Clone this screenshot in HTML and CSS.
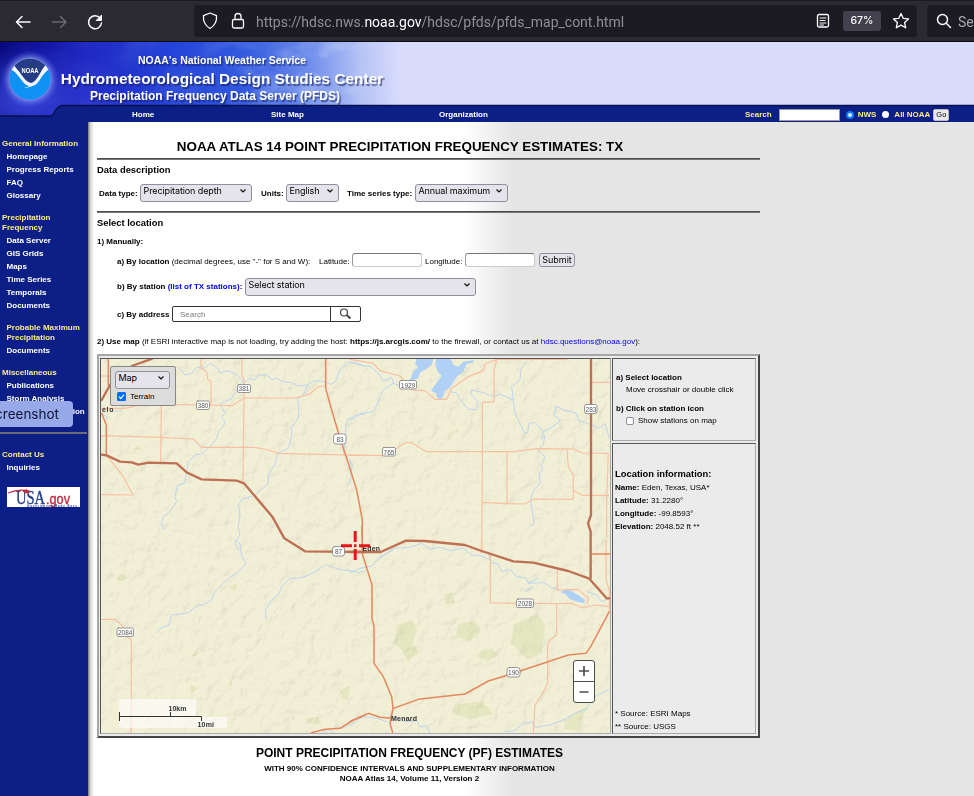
FILE: index.html
```html
<!DOCTYPE html>
<html lang="en">
<head>
<meta charset="utf-8">
<title>PF Map: Contiguous US</title>
<link rel="stylesheet" href="styles.css">
</head>
<body>
<div class="toolbar">
  <svg class="nav-icons" width="120" height="40" viewBox="0 0 120 40" fill="none" stroke-width="1.5" stroke-linecap="round" stroke-linejoin="round">
    <path d="M30 22H17M22 16.500L16.500 22L22 27.500" stroke="#fbfbfe"/>
    <path d="M52.500 22H65.500M60.500 16.500L66 22L60.500 27.500" stroke="#69686f"/>
    <path d="M100 18A6.500 6.500 0 1 0 101.500 23" stroke="#fbfbfe"/>
    <path d="M101.500 15.500V20.500H96.500Z" fill="#fbfbfe" stroke="#fbfbfe" stroke-width="1"/>
  </svg>
  <div class="url-bar">
    <svg width="60" height="32" viewBox="194 6 60 32" fill="none" stroke="#fbfbfe" stroke-width="1.3" stroke-linejoin="round">
      <path d="M210 14L216.500 16.600C217 22 215 26.500 210 29.500C205 26.500 203 22 203.500 16.600Z"/>
      <rect x="232.500" y="20.500" width="11" height="8.500" rx="1.500"/><path d="M235 20.500V17.500a3 3 0 0 1 6 0V20.500"/>
    </svg>
    <span class="url">https://hdsc.nws.<b>noaa.gov</b>/hdsc/pfds/pfds_map_cont.html</span>
    <svg class="reader" width="14" height="16" viewBox="0 0 14 16" fill="none" stroke="#fbfbfe" stroke-width="1.3" stroke-linecap="round"><rect x="1.500" y="1.500" width="11" height="12.500" rx="1.500"/><path d="M4 5H10M4 7.500H9M4 10H10M4 12H7.500" stroke-width="1"/></svg>
    <span class="zoom">67%</span>
    <svg width="18" height="18" viewBox="0 0 18 18" fill="none" stroke="#fbfbfe" stroke-width="1.300" stroke-linejoin="round"><path d="M9 1.500L11.200 6.300L16.500 6.900L12.600 10.500L13.700 15.800L9 13.100L4.300 15.800L5.400 10.500L1.500 6.900L6.800 6.300Z"/></svg>
  </div>
  <div class="search-bar">
    <svg width="16" height="16" viewBox="0 0 16 16" fill="none" stroke="#fbfbfe" stroke-width="1.500" stroke-linecap="round"><circle cx="6.500" cy="6.500" r="5"/><path d="M10.300 10.300L14.500 14.500"/></svg>
    <span>Search</span>
  </div>
</div>

<header class="banner">
  <svg class="banner-art" width="974" height="80" viewBox="0 42 974 80">
    <defs>
      <linearGradient id="sky" gradientUnits="userSpaceOnUse" x1="0" y1="70" x2="400" y2="60">
        <stop offset="0" stop-color="#07077a"/><stop offset=".1" stop-color="#1013a0"/><stop offset=".22" stop-color="#2029c4"/><stop offset=".42" stop-color="#2442d8"/>
        <stop offset=".62" stop-color="#345be0"/><stop offset=".78" stop-color="#7290ec"/><stop offset=".9" stop-color="#b4c2f5"/><stop offset="1" stop-color="#dadcfc"/>
      </linearGradient>
      <radialGradient id="halo"><stop offset=".6" stop-color="#b9c8ff" stop-opacity=".9"/><stop offset="1" stop-color="#3b50e0" stop-opacity="0"/></radialGradient>
      <radialGradient id="glow"><stop offset="0" stop-color="#3b49e0" stop-opacity=".9"/><stop offset="1" stop-color="#3b49e0" stop-opacity="0"/></radialGradient>
      <linearGradient id="fade"><stop offset="0" stop-color="#111"/><stop offset=".5" stop-color="#333"/><stop offset=".8" stop-color="#fff"/><stop offset="1" stop-color="#000"/></linearGradient>
      <mask id="fademask"><rect y="42" width="400" height="64" fill="url(#fade)"/></mask>
      <filter id="cloud" x="0" y="0" width="100%" height="100%"><feTurbulence type="fractalNoise" baseFrequency=".025 .04" numOctaves="4" seed="4"/><feColorMatrix values="0 0 0 0 .7  0 0 0 0 .8  0 0 0 0 1  1.600 0 0 0 -.7"/></filter>
      <clipPath id="disc"><circle cx="30" cy="79" r="20.500"/></clipPath>
    </defs>
    <rect y="42" width="974" height="80" fill="#dadcfc"/>
    <rect y="42" width="400" height="80" fill="url(#sky)"/>
    <ellipse cx="25" cy="100" rx="95" ry="55" fill="url(#glow)"/>
    <g mask="url(#fademask)"><rect y="42" width="400" height="64" filter="url(#cloud)" opacity=".7"/></g>
    <circle cx="30" cy="79" r="29" fill="url(#halo)"/>
    <g clip-path="url(#disc)">
      <rect x="9" y="58" width="42" height="42" fill="#0e93f4"/>
      <path d="M9 58H51V69C47 69 43 75 39 81C35 87 29 88 24 83C19 77 15 70 9 69Z" fill="#f3f5ff"/>
      <path d="M9 58H51L44 67C40 72 37 82 31 83C25 82 21 73 16 68Z" fill="#263c86"/>
      <path d="M24 88C29 87 33 84 37 81C34 86 29 88 24 88Z" fill="#fff"/>
    </g>
    <text x="21.500" y="72.500" class="emblem" textLength="17" lengthAdjust="spacingAndGlyphs">NOAA</text>
    <path d="M0 122V116H51C54 116 56 105 62 105H974V122Z" fill="#0c1f87"/>
    <path d="M0 116H51C54 116 56 105.500 62 105.500H974" fill="none" stroke="#07104e" stroke-width="1.500"/>
  </svg>
  <div class="titles">
    <div class="t1">NOAA's National Weather Service</div>
    <div class="t2">Hydrometeorological Design Studies Center</div>
    <div class="t3">Precipitation Frequency Data Server (PFDS)</div>
  </div>
  <nav class="menu">
    <a class="m-home">Home</a><a class="m-site">Site Map</a><a class="m-org">Organization</a>
    <div class="site-search"><span>Search</span><i class="q"></i><i class="radio on"></i><span>NWS</span><i class="radio"></i><span>All NOAA</span><button>Go</button></div>
  </nav>
</header>

<div class="page">
  <aside class="sidebar">
    <section><h4>General Information</h4><a>Homepage</a><a>Progress Reports</a><a>FAQ</a><a>Glossary</a></section>
    <section><h4>Precipitation<br>Frequency</h4><a>Data Server</a><a>GIS Grids</a><a>Maps</a><a>Time Series</a><a>Temporals</a><a>Documents</a></section>
    <section><h4 class="indent">Probable Maximum<br>Precipitation</h4><a>Documents</a></section>
    <section><h4>Miscellaneous</h4><a>Publications</a><a>Storm Analysis</a><a>Record Precipitation</a></section>
    <div class="rule"></div>
    <section><h4>Contact Us</h4><a>Inquiries</a></section>
    <svg class="usa" width="73" height="20" viewBox="0 0 73 20">
      <rect width="73" height="20" fill="#fff"/>
      <text x="9" y="17" class="usa-a" textLength="29" lengthAdjust="spacingAndGlyphs">USA</text>
      <text x="39" y="16.500" class="usa-b" textLength="24" lengthAdjust="spacingAndGlyphs">.gov</text>
      <path d="M1 6C8 3 15 2.500 22 4" fill="none" stroke="#c52a3d" stroke-width="1.200"/>
      <path d="M19 1.500L20.500 3.500L23 3.500L21 5L22 7L19.500 6L17.500 7L18 5L16 3.500H18.500Z" fill="#c52a3d"/>
      <text x="20" y="19.500" class="usa-c" textLength="50">Government Made Easy</text>
    </svg>
    <div class="tip">Screenshot</div>
  </aside>

  <main>
    <h1>NOAA ATLAS 14 POINT PRECIPITATION FREQUENCY ESTIMATES: TX</h1>
    <div class="hr"></div>
    <h2>Data description</h2>
    <div class="row desc">
      <b class="l1">Data type:</b><span class="sel s1">Precipitation depth<svg class="chev" viewBox="0 0 8 6"><path d="M1.500 1.500L4 4L6.500 1.500"/></svg></span>
      <b class="l2">Units:</b><span class="sel s2">English<svg class="chev" viewBox="0 0 8 6"><path d="M1.500 1.500L4 4L6.500 1.500"/></svg></span>
      <b class="l3">Time series type:</b><span class="sel s3">Annual maximum<svg class="chev" viewBox="0 0 8 6"><path d="M1.500 1.500L4 4L6.500 1.500"/></svg></span>
    </div>
    <div class="hr"></div>
    <h2>Select location</h2>
    <div class="manual"><b>1) Manually:</b></div>
    <div class="row ra"><span class="la"><b>a) By location</b> (decimal degrees, use "-" for S and W):</span><span class="lat">Latitude:</span><i class="field"></i><span class="lon">Longitude:</span><i class="field"></i><button>Submit</button></div>
    <div class="row rb"><span class="lb"><b>b) By station <a>(list of TX stations)</a>:</b></span><span class="sel s4">Select station<svg class="chev" viewBox="0 0 8 6"><path d="M1.500 1.500L4 4L6.500 1.500"/></svg></span></div>
    <div class="row rc"><b class="lc">c) By address</b><span class="addr"><span>Search</span><svg width="29" height="14" viewBox="0 0 29 14" fill="none" stroke="#444"><circle cx="13" cy="5.500" r="3.500" stroke-width="1.200"/><path d="M15.700 8L19.500 11.500" stroke-width="1.800"/></svg></span></div>
    <div class="use"><b>2) Use map</b> (if ESRI interactive map is not loading, try adding the host: <b>https://js.arcgis.com/</b> to the firewall, or contact us at <a>hdsc.questions@noaa.gov</a>):</div>

    <div class="frame">
      <div class="map">
        <svg width="509" height="374" viewBox="101 359 509 374" fill="none" stroke-linejoin="round" stroke-linecap="round">
          <defs>
            <filter id="relief" x="0" y="0" width="100%" height="100%"><feTurbulence type="fractalNoise" baseFrequency=".08" numOctaves="4" seed="9" result="n"/><feColorMatrix in="n" values="0 0 0 0 0 0 0 0 0 0 0 0 0 0 0 1 0 0 0 0"/><feDiffuseLighting surfaceScale="5" diffuseConstant="1.150" lighting-color="#fff"><feDistantLight azimuth="225" elevation="60"/></feDiffuseLighting></filter>
          </defs>
          <rect x="101" y="359" width="509" height="374" fill="#f2efd7"/>
          <g fill="#dfe4b5" opacity=".7">
            <path d="M398 625L412 620L417 630L412 645L420 652L408 661L402 650L394 644Z"/>
            <path d="M458 624L475 621L481 632L470 641L456 636Z"/>
            <path d="M514 624L538 614L545 625L542 652L528 660L511 643Z"/>
            <path d="M455 705L482 701L494 714L470 719L452 713Z"/>
            <path d="M482 650L492 648L498 655L488 661L476 656Z"/>
            <path d="M570 715L587 706L578 731L565 729Z"/>
            <path d="M340 690L350 686L348 700L342 699ZM305 718L318 717L322 724L308 723Z"/>
            <path d="M445 594L452 592L455 603L446 604ZM116 578L122 574L128 578L120 582ZM228 588L237 583L236 590Z"/>
            <path d="M132 450L138 445L142 450ZM450 434L457 429L459 432ZM190 656L198 652L196 656ZM190 685L198 688L192 693ZM228 684L232 679L232 686Z"/>
          </g>
          <rect class="relief" x="101" y="359" width="509" height="374" filter="url(#relief)"/>
          <g transform="translate(350 350) scale(.33333)" fill="#b0d0f5">
            <path d="M200 27H250L245 45L228 58L210 68L205 85L178 93L192 62L205 52L195 42Z"/>
            <path d="M258 27H302L310 45L325 50L340 35L372 30L368 38L350 42L340 65L322 78L310 95L300 112L285 122L276 147L262 145L258 130L243 122L262 95L275 78L262 62L256 45Z"/>
          </g>
          <g stroke="#bdd6ec" stroke-width="3">
            <g transform="translate(95 330) scale(.33333)">
              <path d="M250 112L270 135L290 130L305 112L330 115L345 100L365 112L378 130L395 122L420 130L440 150L445 160L465 145L480 150L490 135L515 135L530 148L548 145L560 155L590 158L610 168L635 165L660 152L690 155L707 163L722 155L735 120L760 98L785 98L810 110"/>
              <path d="M440 160L420 190L410 205L390 215L375 222L390 250L380 262L390 275L385 290L372 302L365 325L345 350L320 372L300 375L280 395L275 430L268 460L248 465L240 500L245 515L225 545L205 560L198 580L208 598"/>
              <path d="M638 165L625 195L608 205L612 235L610 265L590 290L590 320L580 355L550 368L540 400L520 435L520 460L492 485L472 498L440 510L430 525L435 555L430 590L435 615L420 640L430 660"/>
              <path d="M810 252L785 255L758 268L752 290L752 330L745 370L765 390L770 430L765 460M20 250L38 262L32 270M60 245L78 240"/>
            </g>
            <g transform="translate(350 350) scale(.33333)">
              <path d="M0 35L35 48L60 48L85 70L100 92L125 82L130 100L105 115L95 128L85 155L70 185L30 190L15 205L0 208M130 100L148 107"/>
              <path d="M300 125L318 128L335 155L355 178L380 178L383 155L362 132L365 120L400 128L430 140L450 132L490 150L485 110L510 90L512 60L528 35M490 150L495 190L515 230L522 248L532 250L538 220L555 217L580 245L575 268L585 255L580 285L562 300L585 320L575 345L578 360L568 370L570 400L552 420L542 450L545 470L552 520L540 530"/>
              <path d="M580 245L600 235L632 212L612 195L618 168L640 180L680 190L685 210L750 235L765 220L778 265M0 330L8 350L0 370"/>
              <path d="M90 625L130 595L180 592L215 580L240 598L270 592L300 602L340 595L365 615L395 618L420 630"/>
            </g>
            <g transform="translate(95 540) scale(.33333)"><path d="M420 0L435 12L440 48L454 70L430 95L400 115L380 135L360 155L350 180L325 195L310 195L280 218L255 222L230 225L222 255L195 265L186 278"/><path d="M810 92L790 98L770 92L740 90L712 82L692 73L660 95L635 108L610 115L585 115L560 140L550 165L530 180L512 208L512 236M682 578L700 568L715 578M740 565L775 550L810 525"/></g>
            <g transform="translate(350 540) scale(.33333)"><path d="M0 98L30 85L65 78L85 55L130 30M415 40L425 68L445 72L455 95L480 88L500 110L530 115L535 130L580 128L600 140L630 150M535 130L565 115M525 155L550 142M710 155L740 165L755 185L775 175"/><path d="M465 575L495 572L520 550L550 545L555 562L600 555L650 535L680 518L710 508L725 475L778 448M0 545L40 530L80 535L110 545M130 530L165 545L200 542L210 560L230 558L240 578"/></g>
          </g>
          <path d="M560 592L568 589L578 595L585 600L587 595L584 603L578 602L570 599L565 594Z" fill="#aed0f5"/>
          <g stroke="#f8c0a0" stroke-width="3.500">
            <g transform="translate(95 330) scale(.33333)"><path d="M318 87V115L335 125L338 148L348 155V226M20 235H90L150 222L412 227L447 204H600L645 192L670 170L692 168M441 87V135L447 150V204L444 455M199 228L197 397M20 317L200 322L295 327L320 352H475L510 357L550 370L810 376M35 376L85 440L114 495L20 494M20 138H45"/></g>
            <g transform="translate(350 350) scale(.33333)"><path d="M0 28L70 40L90 62L150 78L165 95L185 120L225 122L255 148L290 148L305 115L355 80L400 62L405 42L440 28H650M440 28L432 60V155L397 157V350L395 603L420 610V625M0 316H105L125 305L145 292L165 278L185 278L230 305H490L560 296L672 297L695 309L775 310L770 450V560M471 307V460M397 457L470 461L525 462L550 447L670 448V375L655 350L651 300M672 423L697 436H775M724 97H778"/></g>
            <g transform="translate(95 540) scale(.33333)"><path d="M20 238H60L80 255L90 285L109 300V578"/></g>
            <g transform="translate(350 540) scale(.33333)"><path d="M395 0V38M421 45V189L620 191L665 190L695 203L740 195L778 200M620 191V285L600 300L593 315V430L575 465L555 495L550 578M622 92V150L685 148L715 175L710 190M768 0V120L778 150V210"/></g>
          </g>
          <g stroke="#e5875f" stroke-width="4.500">
            <g transform="translate(95 330) scale(.33333)"><path d="M692 87V175L710 240L735 325L760 400L785 480L802 570V660M40 87V165M20 250L34 285V375"/></g>
            <g transform="translate(350 540) scale(.33333)"><path d="M36 -40L38 45L66 135V235L72 260V370L100 410L125 470L129 505L120 550L128 578M130 505L205 478L345 462L415 423L490 400L655 345L708 340L722 320L778 215M0 545L55 520L90 532L125 535M722 42H778"/></g>
            <g transform="translate(95 540) scale(.33333)"><path d="M650 578L690 568L735 565L775 540L810 525"/></g>
          </g>
          <g stroke="#bd7053" stroke-width="7">
            <g transform="translate(95 330) scale(.33333)"><path d="M20 374L35 376L75 395L110 397L130 404L160 398L245 400L275 427L320 448L425 452L447 460L532 560L568 625L630 664L810 666M20 210L45 165M110 108L170 87"/></g>
            <g transform="translate(350 350) scale(.33333)"><path d="M723 27V495L714 520L722 545V685M0 606H92L168 572L225 573L345 585L395 603L490 634L550 638L655 663L718 686L770 745H778"/></g>
          </g>
          <g class="shields" fill="#fff" stroke="#7f7f7f" stroke-width=".8">
            <rect x="237.500" y="384.500" width="13" height="8" rx="1.500"/><rect x="196.500" y="401" width="13" height="8.500" rx="1.500"/><rect x="333.500" y="434" width="12.500" height="10" rx="2.500"/>
            <rect x="399.500" y="380.500" width="17" height="8.500" rx="1.500"/><rect x="584.500" y="404.500" width="12.500" height="9" rx="2"/><rect x="382.500" y="447.500" width="13" height="8.500" rx="1.500"/>
            <rect x="332.500" y="546.500" width="12" height="9.500" rx="2.500"/><rect x="117" y="628" width="16.500" height="8.500" rx="1.500"/><rect x="516.500" y="599" width="17" height="8.500" rx="1.500"/><rect x="507" y="667.500" width="13" height="9.500" rx="2.500"/>
          </g>
          <g class="num">
            <text x="244" y="391">381</text><text x="203" y="408">380</text><text x="340" y="441.500">83</text><text x="408" y="387.500">1929</text><text x="591" y="411.500">283</text><text x="389" y="454.500">765</text><text x="338.500" y="554">87</text><text x="125.200" y="635">2084</text><text x="525" y="606">2028</text><text x="513.500" y="675">190</text>
          </g>
          <g class="town"><text x="102" y="412" textLength="11.500">elo</text><text x="362.500" y="551" textLength="17.500">Eden</text><text x="391" y="721" textLength="26">Menard</text></g>
          <path d="M355.200 531V542M355.200 549V560M341 545.700H352M359 545.700H370M354 545.700H356.500" stroke="#e8141c" stroke-width="3" stroke-linecap="butt"/>
          <g fill="#fff" fill-opacity=".6"><rect x="119" y="699" width="77" height="18" rx="2"/><rect x="119" y="717" width="108" height="11" rx="2"/></g>
          <path d="M119.500 712V721M119.500 716.500H201.500V721M170.500 712V716.500" stroke="#323232" stroke-linecap="butt"/>
          <g class="scale"><text x="168.500" y="711" textLength="18">10km</text><text x="197.500" y="727" textLength="16.500">10mi</text></g>
        </svg>
        <div class="basemap"><span class="sel">Map<svg class="chev" viewBox="0 0 8 6"><path d="M1.500 1.500L4 4L6.500 1.500"/></svg></span>
          <label><svg width="9" height="9" viewBox="0 0 9 9"><rect width="9" height="9" rx="1.500" fill="#0a6cf0"/><path d="M2 4.700L3.800 6.500L7 2.500" fill="none" stroke="#fff" stroke-width="1.200"/></svg>Terrain</label></div>
        <div class="zoomer"><svg width="20" height="41" viewBox="0 0 20 41" stroke="#4c4c4c"><path d="M0 20.500H20"/><path d="M10 5V15M5 10H15M5.500 31H14.500" stroke-width="1.600"/></svg></div>
      </div>
      <div class="info">
        <div class="cell how">
          <b>a) Select location</b><span class="sub">Move crosshair or double click</span>
          <b class="gap">b) Click on station icon</b><span class="sub check"><i></i>Show stations on map</span>
        </div>
        <div class="cell loc">
          <h3>Location information:</h3>
          <p><b>Name:</b> Eden, Texas, USA*</p><p><b>Latitude:</b> 31.2280°</p><p><b>Longitude:</b> -99.8593°</p><p><b>Elevation:</b> 2048.52 ft **</p>
          <div class="src"><p>* Source: ESRI Maps</p><p>** Source: USGS</p></div>
        </div>
      </div>
    </div>
    <div class="foot"><div class="f1">POINT PRECIPITATION FREQUENCY (PF) ESTIMATES</div><div class="f2">WITH 90% CONFIDENCE INTERVALS AND SUPPLEMENTARY INFORMATION</div><div class="f3">NOAA Atlas 14, Volume 11, Version 2</div></div>
  </main>
</div>
</body>
</html>
```
FILE: styles.css
```css
* { box-sizing: border-box; }
body { margin: 0; width: 974px; height: 796px; overflow: hidden; font: 8px "Liberation Sans", Arial, sans-serif; color: #000; background: #e5e5e5; }
i { font-style: normal; }
h1, h2, h3, h4, p { margin: 0; }
button { font-family: "Liberation Sans", Arial, sans-serif; padding: 0; color: #000; }

.toolbar { display: flex; height: 42px; background: #2b2a33; border-top: 1px solid #1c1b22; border-bottom: 1px solid #0c0c0d; overflow: hidden; }
.nav-icons { margin-top: -1px; width: 120px; flex: none; }
.url-bar { display: flex; align-items: center; width: 723px; height: 32px; flex: none; margin: 4px 0 0 74px; background: #1c1b22; border-radius: 4px; color: #8f8f97; }
.url { width: 560px; margin-left: 2px; padding-top: 2px; font: 14px Roboto, sans-serif; }
.url b { font-weight: 400; color: #fbfbfe; }
.reader { margin: 0 13px 0 0; }
.zoom { width: 38px; height: 20px; margin-right: 11px; border-radius: 3px; background: #42414d; color: #fbfbfe; font: 500 10.500px/20px Inter, sans-serif; text-align: center; }
.search-bar { display: flex; align-items: center; width: 60px; height: 32px; flex: none; margin: 4px 0 0 10px; padding-left: 9px; background: #1c1b22; border-radius: 4px; color: #a5a5aa; font: 14px Roboto, sans-serif; }
.search-bar svg { flex: none; margin-right: 6px; }
.search-bar span { padding-top: 2px; }

.banner { position: relative; height: 80px; font-weight: 700; color: #fff; }
.banner-art { position: absolute; inset: 0; }
.emblem { font: 700 7px "Liberation Sans", sans-serif; fill: #fff; }
.titles { position: relative; width: 444px; height: 64px; padding-top: 9px; text-align: center; text-shadow: 1.500px 1.500px 1px rgba(20, 25, 80, .6); white-space: nowrap; }
.t1 { font-size: 10.500px; line-height: 19px; }
.t2 { font-size: 15.400px; line-height: 17px; }
.t3 { width: 430px; font-size: 12px; line-height: 18px; }
.menu { position: relative; display: flex; height: 16px; font-size: 8px; line-height: 17px; }
.m-home { width: 139px; margin-left: 132px; }
.m-site { width: 168px; }
.m-org { width: 306px; }
.site-search { display: flex; align-items: center; height: 17px; color: #fce98b; white-space: nowrap; }
.q { width: 61px; height: 12px; margin: 1px 6px 0 7px; background: #fff; border: 1px solid #999; }
.radio { width: 7px; height: 7px; margin-right: 5px; border-radius: 50%; background: #fff; }
.radio.on { width: 8px; height: 8px; margin-right: 4px; border: 2px solid #0a7cff; background: #d8ecff; }
.site-search span + .radio { margin-left: 6px; }
.site-search button { width: 16px; height: 12px; margin: 1px 0 0 3px; border: 1px solid #bbb; border-radius: 2px; background: #e9e9ed; font-size: 7.500px; line-height: 10px; }

.page { display: flex; height: 674px; }
.sidebar { position: relative; width: 88px; flex: none; padding-top: 17px; background: #0c1f87; color: #fff; font-size: 8px; font-weight: 700; white-space: nowrap; }
.sidebar section { margin-bottom: 11px; }
.sidebar h4 { padding-left: 2px; margin-bottom: 1px; color: #fce98b; font-size: 8px; line-height: 10px; }
.sidebar h4.indent { padding-left: 6.500px; }
.sidebar a { display: block; padding-left: 6.500px; line-height: 13px; }
.rule { width: 87px; height: 2px; margin: 14px 0 16px; background: #6c6c78; }
.usa { display: block; margin: 13px 0 0 7px; }
.sidebar section:nth-last-of-type(1) { margin-bottom: 0; }
.usa-a { font: 19px "Liberation Serif", serif; fill: #263f88; stroke: #263f88; stroke-width: .4; }
.usa-b { font: 14px "Liberation Sans", sans-serif; fill: #b9273c; stroke: #b9273c; stroke-width: .3; }
.usa-c { font: 700 3px "Liberation Sans", sans-serif; fill: #263f88; }
.tip { position: absolute; left: -22px; top: 279px; width: 95px; height: 26px; padding-right: 14px; border-radius: 4px; background: #98a9ea; color: #0c1434; font: 13.500px/26px Inter, sans-serif; text-align: right; }

main { width: 886px; padding-left: 9px; background: linear-gradient(90deg, #777 0, #ccc 2px, #e8e8e8 4px, #fff 6px, #fff 376px, #f3f3f3 398px, #e5e5e5 425px); white-space: nowrap; }
h1 { width: 606px; height: 36px; padding-top: 12px; font-size: 13.400px; line-height: 25px; text-align: center; }
.hr { width: 663px; height: 2px; background: #4d4d4d; border-bottom: 1px solid #777; }
h2 { font-size: 9.400px; line-height: 20px; }
.row { display: flex; align-items: center; }
.desc { height: 31px; align-items: flex-start; }
.desc b { line-height: 27px; }
.sel { display: flex; justify-content: space-between; align-items: center; height: 18px; padding: 0 4px 4px 2.500px; border: 1px solid #8f8f9d; border-radius: 3px; background: #e5e4ea; font: 9px/12px Inter, sans-serif; letter-spacing: -.1px; }
.chev { width: 8px; height: 6px; fill: none; stroke: #111; stroke-width: 1.200; }
.desc .sel { margin-top: 4px; }
.l1 { width: 43px; padding-left: 2px; }
.s1 { width: 112px; }
.l2 { width: 34px; padding-left: 9px; }
.s2 { width: 53px; }
.l3 { width: 76px; padding-left: 8px; }
.s3 { width: 93px; }
.manual { line-height: 17px; height: 16px; }
.ra { height: 23px; padding-top: 1px; }
.la { width: 222px; padding-left: 20px; }
.lat { width: 33px; }
.lon { width: 43px; padding-left: 3px; }
.field { width: 70px; height: 14px; margin-top: -2px; border: 1px solid #ccc; border-top-color: #777; border-left-color: #999; border-radius: 3px; background: #fff; }
.ra button { width: 36px; height: 14px; margin: -2px 0 0 4px; border: 1px solid #8f8f9d; border-radius: 3px; background: #e5e4ea; font: 9px/12px Inter, sans-serif; }
a { color: inherit; }
.rb { height: 28px; }
.rb a, .use a { color: #0000e6; }
.lb { width: 148px; padding-left: 20px; }
.s4 { width: 231px; margin-top: 2px; }
.rc { height: 28px; }
.lc { width: 75px; padding-left: 20px; }
.addr { display: flex; width: 189px; height: 16px; border: 1px solid #333; border-radius: 2px; background: #fff; color: #777; font-size: 8px; line-height: 15px; }
.addr span { width: 158px; padding-left: 7px; border-right: 1px solid #333; }
.use { height: 26px; padding-top: 4px; line-height: 19px; font-size: 8px; }

.frame { display: flex; gap: 1px; width: 663px; height: 384px; padding: 2px 2px 2px 1px; border: 2px solid #a6a6a6; border-right-color: #444; border-bottom-color: #444; background: #ebebeb; }
.map { position: relative; width: 511px; height: 376px; border: 1px solid #555; border-right-color: #aaa; border-bottom-color: #aaa; overflow: hidden; }
.map > svg { display: block; width: 509px; height: 374px; }
.relief { opacity: .12; mix-blend-mode: multiply; }
.num { font: 6.500px "Liberation Sans", sans-serif; fill: #555; text-anchor: middle; }
.town, .scale { font: 700 7px "Liberation Sans", sans-serif; fill: #333; }
.basemap { position: absolute; left: 9px; top: 7px; width: 66px; height: 40px; padding: 4px; border: 1px solid #888; border-radius: 2px; background: #dcdcdc; }
.basemap .sel { width: 55px; }
.basemap label { display: flex; align-items: center; gap: 4px; height: 14px; margin: 0 0 0 2px; font-size: 8px; }
.zoomer { position: absolute; left: 472px; top: 301px; width: 22px; height: 43px; border: 1px solid #4c4c4c; border-radius: 3px; background: #fff; }
.zoomer svg { display: block; }
.info { display: flex; flex-direction: column; gap: 2px; width: 144px; }
.cell { border: 1px solid #555; border-right-color: #aaa; border-bottom-color: #aaa; padding-left: 3px; }
.how { display: flex; flex-direction: column; height: 83px; padding-top: 13px; line-height: 12px; }
.how .sub { padding-left: 10px; }
.how .gap { margin-top: 7px; }
.check { display: flex; align-items: center; }
.check i { width: 8px; height: 8px; margin: 0 4px 0 0; border: 1px solid #8f8f9d; border-radius: 2px; background: #fff; }
.loc { display: flex; flex-direction: column; height: 291px; padding: 22px 0 0 2px; line-height: 13px; }
.loc h3 { font-size: 9.400px; line-height: 15px; }
.src { margin-top: auto; }
.foot { width: 625px; padding-top: 7px; font-weight: 700; text-align: center; }
.f1 { font-size: 12px; line-height: 16px; }
.f2 { font-size: 8px; line-height: 10px; margin-top: 3px; }
.f3 { font-size: 8px; line-height: 10px; }
```
